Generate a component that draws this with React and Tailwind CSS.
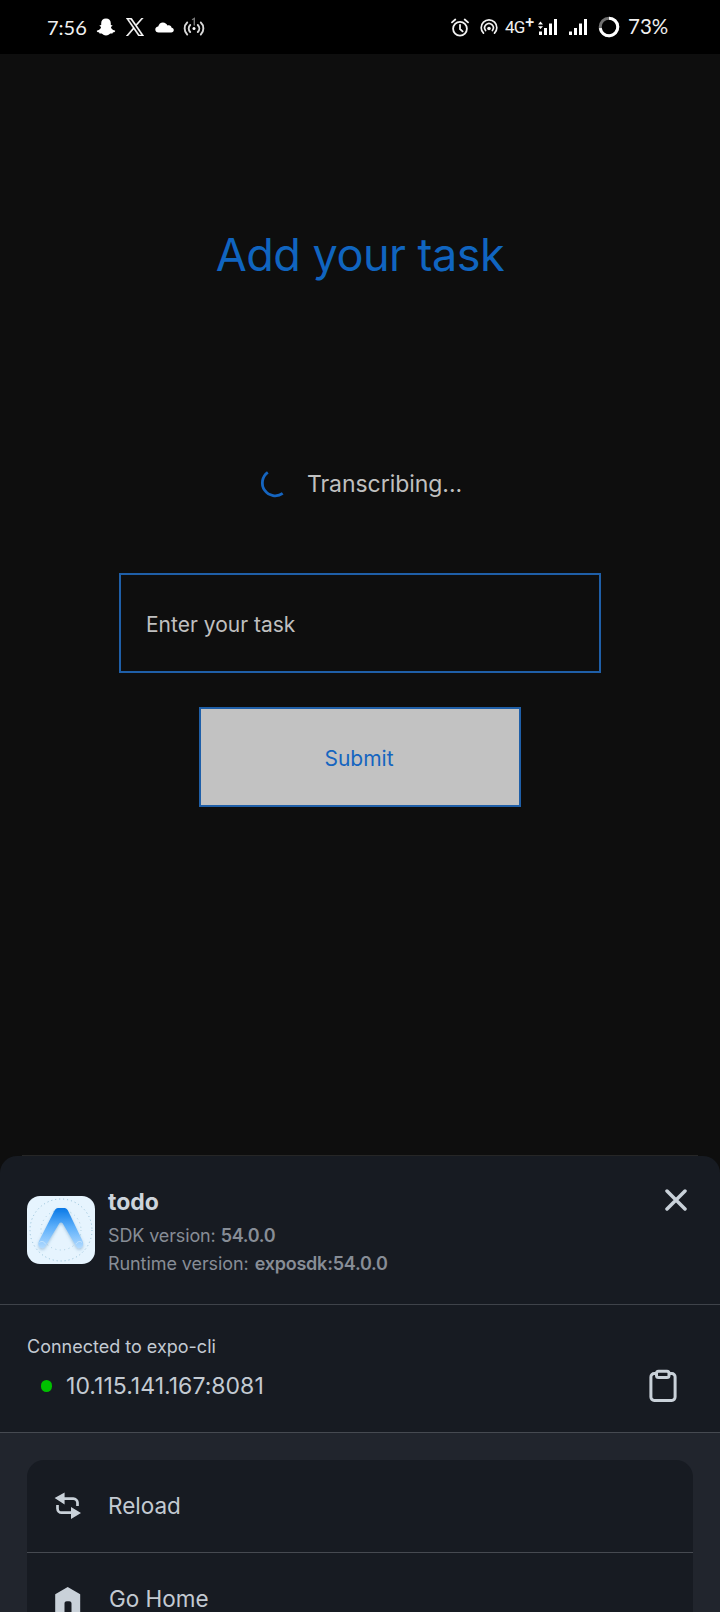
import React from "react";

function SnapIcon() {
  return (
    <svg width="20" height="18" viewBox="0 0 20 18" fill="#fff">
      <path d="M10 .6c-3 0-4.8 2-4.8 4.6v1.900c-.7.3-1.500-.2-1.600.4-.1.7 1.200 1 1.400 1.500C5.200 10 3.600 12 1.200 12.600c-.7.2-.4 1 .2 1.300.7.400 1.600.300 1.900.800.200.400 0 .8.500.900.7.100 1.600-.2 2.600.300.9.5 1.700 1.500 3.600 1.500s2.700-1 3.600-1.500c1-.5 1.900-.2 2.600-.3.5-.1.300-.5.500-.9.300-.5 1.200-.4 1.900-.8.6-.3.9-1.100.2-1.300C16.400 12 14.800 10 15 9c.2-.5 1.500-.8 1.400-1.500-.1-.6-.9-.1-1.600-.4V5.200C14.800 2.600 13 .6 10 .6z" />
    </svg>
  );
}

function XLogo() {
  return (
    <svg width="18" height="18" viewBox="0 0 24 24" fill="#fff" stroke="#fff" strokeWidth=".7">
      <path d="M14.230 10.160 22.970 0h-2.070l-7.590 8.820L7.250 0H.26l9.170 13.340L.26 24h2.070l8.020-9.320L16.750 24h6.990l-9.510-13.840zm-2.840 3.300-.93-1.330L3.080 1.560h3.180l5.970 8.540.93 1.330 7.760 11.090h-3.180l-6.350-9.060z" />
    </svg>
  );
}

function CloudIcon() {
  return (
    <svg width="19" height="11" viewBox="0 0 19 11" fill="#fff">
      <path d="M3.700 10.500C1.600 10.500.3 9.200.3 7.500c0-1.600 1.200-2.900 2.900-3C3.800 2 5.600.4 7.900.4c2.200 0 3.800 1.300 4.500 3.100.5-.2 1-.3 1.500-.2 1.500.1 2.500 1.200 2.700 2.500 1.300.1 2.200 1.100 2.200 2.300 0 1.400-1.100 2.400-2.600 2.400z" />
    </svg>
  );
}

function BroadcastIcon() {
  return (
    <svg width="22" height="20" viewBox="0 0 22 20" fill="none" stroke="#d8d8d8" strokeWidth="1.900" strokeLinecap="round">
      <path d="M4.200 5.500C.8 8.500.8 14.500 4.200 17.500M17.800 5.500c3.400 3 3.400 9 0 12" />
      <path d="M7.200 8c-2 2-2 5 0 7M14.800 8c2 2 2 5 0 7" />
      <circle cx="11" cy="11.500" r="1.500" fill="#fff" stroke="none" />
      <path d="M9.500 2.500 11.300 1.500V8" stroke="#777" strokeWidth="1.400" />
    </svg>
  );
}

function AlarmIcon() {
  return (
    <svg width="18" height="19" viewBox="0 0 18 19" fill="none" stroke="#f2f2f2" strokeWidth="1.800" strokeLinecap="round">
      <circle cx="9" cy="10.700" r="6.900" />
      <path d="M9 6.800v4.200l2.600 2.300M1 4.400 4.300 1.500M17 4.400l-3.300-2.900" />
    </svg>
  );
}

function HotspotIcon() {
  return (
    <svg width="18" height="16" viewBox="0 0 18 16" fill="none" stroke="#f2f2f2" strokeWidth="1.700" strokeLinecap="round">
      <path d="M3.500 14.200a7.800 7.800 0 1 1 11 0" />
      <path d="M5.600 11.500a4.300 4.300 0 1 1 6.800 0" />
      <circle cx="9" cy="9.500" r="1.800" fill="#f2f2f2" stroke="none" />
    </svg>
  );
}

function SignalIcon({ arrows }) {
  return (
    <svg width="20" height="18" viewBox="0 0 20 18" fill="#fff">
      <rect x="1" y="13.500" width="3" height="3.500" />
      <rect x="6" y="10" width="3" height="7" />
      <rect x="11" y="5.500" width="3" height="11.500" />
      <rect x="16" y="1" width="3" height="16" />
      {arrows && <path d="M0 6.600 2.500 3.500 5 6.600zM0 8.200h5L2.500 11z" />}
    </svg>
  );
}

function BatteryRing() {
  return (
    <svg width="22" height="22" viewBox="0 0 22 22" fill="none" strokeWidth="3">
      <circle cx="11" cy="11" r="8.800" stroke="#707070" />
      <path d="M11 2.200a8.800 8.800 0 1 1-8.750 9.900" stroke="#fff" />
    </svg>
  );
}

function StatusBar() {
  return (
    <header className="flex h-[54px] items-center bg-black pl-[47px] pr-[51px] font-['Lato',sans-serif] text-[20px] leading-none text-[#f0f0f0]">
      <span className="w-[49px]">7:56</span>
      <SnapIcon />
      <span className="ml-[10px]"><XLogo /></span>
      <span className="ml-[11px]"><CloudIcon /></span>
      <span className="ml-[9px]"><BroadcastIcon /></span>
      <div className="ml-auto flex items-center">
        <AlarmIcon />
        <span className="ml-[11px]"><HotspotIcon /></span>
        <span className="ml-[7px] flex w-[28px] font-['Roboto',sans-serif] text-[17px] leading-none tracking-[-0.9px]">
          4G<span className="-mt-[4px] ml-[1px] text-[16px] font-medium">+</span>
        </span>
        <span className="ml-[5px]"><SignalIcon arrows /></span>
        <span className="ml-[10px]"><SignalIcon /></span>
        <span className="ml-[10px]"><BatteryRing /></span>
        <span className="-mt-[1px] ml-[8px] w-[41px] text-[20.500px]">73%</span>
      </div>
    </header>
  );
}

function AppLogo() {
  return (
    <svg width="68" height="68" viewBox="0 0 68 68" fill="none">
      <defs>
        <linearGradient id="stroke" x1="0" y1="12" x2="0" y2="53" gradientUnits="userSpaceOnUse">
          <stop offset="0" stopColor="#0a78e6" />
          <stop offset=".45" stopColor="#5aaefa" />
          <stop offset="1" stopColor="#b5dcff" />
        </linearGradient>
        <filter id="glow" x="-20%" y="-20%" width="140%" height="150%">
          <feDropShadow dx="0" dy="1.500" stdDeviation="1.500" floodColor="#4a86b8" floodOpacity=".45" />
        </filter>
      </defs>
      <rect width="68" height="68" rx="13" fill="#e6f4fe" />
      <circle cx="34" cy="34" r="31" stroke="#8fbdd6" strokeWidth="1" strokeDasharray="1 3" />
      <circle cx="34" cy="34" r="20" stroke="#a9cee2" strokeWidth="1" strokeDasharray="1 3.500" />
      <path
        d="M31 12h6.500c1.600 0 2.500 1 3.300 2.300L55.500 45c1.200 2.700.8 5.600-1.300 6.800-2 1.100-4 .3-5.300-1.800L35.800 27.500c-.9-1.400-2.700-1.400-3.600 0L18.600 50c-1.300 2.100-3.300 2.900-5.300 1.800-2.100-1.200-2.500-4.100-1.300-6.800l15.700-30.700C28.400 13 29.400 12 31 12z"
        fill="url(#stroke)"
        filter="url(#glow)"
      />
      <path d="M12.500 46.500c2-2 5-.8 6 1.800M55 46.500c-2-2-5-.8-6 1.800" stroke="#cfe8fd" strokeWidth=".8" />
    </svg>
  );
}

function ReloadIcon() {
  return (
    <svg width="28" height="28" viewBox="0 0 28 28" fill="none">
      <path d="M9 6.600h10.300a4.200 4.200 0 0 1 4.200 4.200v3.200M3.500 13v3.500a4.200 4.200 0 0 0 4.200 4.200H18" stroke="#c9d1d9" strokeWidth="2.700" />
      <path d="M.6 6 10.600.6v11.900zM27 20.900l-10-6v12z" fill="#c9d1d9" />
    </svg>
  );
}

function HomeIcon() {
  return (
    <svg width="26" height="28" viewBox="0 0 26 28">
      <path d="M12.700 0 25.200 7.200V28h-8.700V16.500c0-1.400-1-2.200-2.300-2.200h-2.400c-1.300 0-2.300.8-2.300 2.200V28H.2V7.200z" fill="#c9d1d9" />
    </svg>
  );
}

function ClipboardIcon() {
  return (
    <svg width="28" height="34" viewBox="0 0 28 34" fill="none" stroke="#c9d1d9" strokeWidth="3" strokeLinejoin="round">
      <path d="M7 4.600H5.200a3.300 3.300 0 0 0-3.300 3.300v20.200a3.300 3.300 0 0 0 3.300 3.300h17.600a3.300 3.300 0 0 0 3.300-3.300V7.900a3.300 3.300 0 0 0-3.300-3.300H20.500" />
      <rect x="7.500" y="2.200" width="12.500" height="6.300" rx="2" />
    </svg>
  );
}

export default function App() {
  return (
    <div className="flex h-[1612px] w-[720px] flex-col overflow-hidden bg-[#0e0e0e] font-['Inter',sans-serif] leading-none">
      <StatusBar />

      <main className="flex h-[1101px] flex-col items-center whitespace-nowrap">
        <h1 className="mt-[170px] flex h-[60px] items-center text-[45px] font-normal tracking-[-0.5px] text-[#1065c0]">Add your task</h1>

        <div className="mt-[170px] flex h-[60px] w-[200px] items-center">
          <svg className="-ml-[2px] shrink-0" width="27" height="29" viewBox="0 0 27 29" fill="none" stroke="#1565c0" strokeWidth="2.800">
            <path d="M9.800 2.300A12.700 12.700 0 1 0 24.700 23.400" />
          </svg>
          <span className="ml-[22px] mt-[1px] text-[23px] tracking-[-0.05px] text-[#c0c0c0]">Transcribing...</span>
        </div>

        <div className="mt-[59px] flex h-[100px] w-[482px] items-center border-2 border-[#1f5fa8] pl-[25px] pt-[2px] text-[21px] text-[#c0c0c0]">
          Enter your task
        </div>

        <button className="mt-[34px] flex h-[100px] w-[322px] items-center justify-center border-2 border-[#1f5fa8] bg-[#c2c2c2] pr-[2px] pt-[2px] text-[21px] text-[#1565c0]">
          Submit
        </button>
      </main>

      <section className="flex grow flex-col whitespace-nowrap">
        <div className="mx-[22px] h-px shrink-0 bg-[#262626]" />
        <div className="flex h-[149px] shrink-0 rounded-t-[17px] border-b border-[#3f434a] bg-[#171b22] pl-[27px]">
          <div className="mt-[40px]"><AppLogo /></div>
          <div className="ml-[13px] flex flex-col">
            <h2 className="mt-[30px] flex h-[32px] items-center text-[23px] font-bold text-[#cdd4db]">todo</h2>
            <p className="mt-[4px] flex h-[28px] items-center text-[18px] tracking-[-0.13px] text-[#878d96]">
              SDK version:<b className="ml-[5px] font-semibold tracking-[-0.3px]">54.0.0</b>
            </p>
            <p className="flex h-[28px] items-center text-[18px] tracking-[-0.08px] text-[#878d96]">
              Runtime version:<b className="ml-[6px] font-semibold tracking-[-0.23px]">exposdk:54.0.0</b>
            </p>
          </div>
          <svg className="ml-auto mr-[33px] mt-[33px]" width="22" height="22" viewBox="0 0 22 22" stroke="#c9d1d9" strokeWidth="3.500" strokeLinecap="round">
            <path d="M2 2l18 18M20 2 2 20" />
          </svg>
        </div>

        <div className="flex h-[128px] shrink-0 items-start border-b border-[#464a51] bg-[#171b22] pl-[27px] pr-[43px]">
          <div className="flex flex-col">
            <p className="mt-[28px] flex h-[28px] items-center text-[18px] text-[#c3cad2]">Connected to expo-cli</p>
            <p className="mt-[9px] flex h-[32px] items-center text-[23px] tracking-[0.03px] text-[#c3cad2]">
              <span className="ml-[14px] mr-[14px] h-[12px] w-[11px] rounded-full bg-[#00c000]" />
              10.115.141.167:8081
            </p>
          </div>
          <div className="ml-auto mt-[64px]"><ClipboardIcon /></div>
        </div>

        <div className="grow bg-[#21252d] px-[27px] pt-[27px]">
          <div className="flex h-[152px] flex-col overflow-hidden rounded-t-[17px] bg-[#171b22] text-[22.500px] text-[#c3cad2]">
            <div className="flex h-[93px] shrink-0 items-center border-b border-[#464a51] pl-[27px]">
              <ReloadIcon />
              <span className="ml-[26px]">Reload</span>
            </div>
            <div className="flex h-[93px] shrink-0 items-start pl-[28px]">
              <span className="mt-[34px]"><HomeIcon /></span>
              <span className="ml-[28px] mt-[35px]">Go Home</span>
            </div>
          </div>
        </div>
      </section>
    </div>
  );
}
